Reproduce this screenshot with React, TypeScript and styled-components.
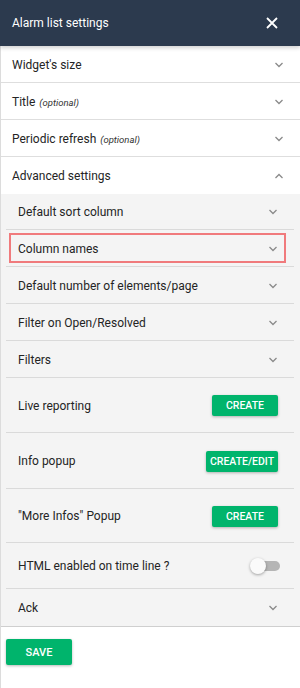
import React from "react";
import styled, { createGlobalStyle } from "styled-components";

const Global = createGlobalStyle`
  html, body { margin: 0; padding: 0; background: #fff; }
  body { font-family: Roboto, "Liberation Sans", Arial, sans-serif; -webkit-font-smoothing: antialiased; }
  * { box-sizing: border-box; }
`;

const Panel = styled.div`
  width: 300px;
  min-height: 688px;
  display: flex;
  flex-direction: column;
  background: #fff;
`;

const Header = styled.div`
  height: 46px;
  background: #2c3a4e;
  display: flex;
  align-items: center;
  justify-content: space-between;
  padding: 0 22px 0 12px;
  color: #fff;
  font-size: 12px;
  position: relative;
  z-index: 1;
  box-shadow: 0 2px 4px rgba(0, 0, 0, 0.18);
`;

const Body = styled.div`
  flex: 1;
  border-left: 1px solid #dcdcdc;
  display: flex;
  flex-direction: column;
`;

const TopRow = styled.div<{ $last?: boolean }>`
  height: 37px;
  display: flex;
  align-items: center;
  justify-content: space-between;
  padding: 1px 16px 0 11px;
  border-bottom: ${(p) => (p.$last ? "none" : "1px solid #dedede")};
  font-size: 12px;
  color: #242424;
`;

const Optional = styled.span`
  font-style: italic;
  font-size: 9.5px;
  color: #333;
  margin-left: 4px;
`;

const Sub = styled.div`
  background: #f4f4f4;
  padding: 0 6px 0 5px;
  border-bottom: 1px solid #cfcfcf;
`;

const Row = styled.div<{ $h?: number; $last?: boolean }>`
  height: ${(p) => p.$h ?? 37}px;
  display: flex;
  align-items: center;
  justify-content: space-between;
  padding: 1px 16px 0 12px;
  border-bottom: ${(p) => (p.$last ? "none" : "1px solid #dadada")};
  font-size: 12px;
  color: #242424;
`;

const HiRow = styled.div`
  height: 37px;
  padding: 3px 8px 3px 3px;
  border-bottom: 1px solid #dadada;
  display: flex;
`;

const HiBox = styled.div`
  flex: 1;
  display: flex;
  align-items: center;
  justify-content: space-between;
  border: 2px solid #f07a7c;
  padding: 1px 6px 0 7px;
  font-size: 12px;
  color: #242424;
`;

const GreenButton = styled.button<{ $w: number; $h?: number; $fs?: number }>`
  width: ${(p) => p.$w}px;
  height: ${(p) => p.$h ?? 21}px;
  border: none;
  border-radius: 2px;
  background: #00b46c;
  color: #fff;
  font-family: Roboto, "Liberation Sans", Arial, sans-serif;
  font-weight: 500;
  font-size: ${(p) => p.$fs ?? 10.5}px;
  padding: 0;
  box-shadow: 0 1px 3px rgba(0, 0, 0, 0.28);
`;

const Footer = styled.div`
  padding: 12px 0 0 5px;
`;

const Toggle = styled.div`
  width: 29px;
  height: 10px;
  border-radius: 5px;
  background: #b5b5b5;
  position: relative;
  margin-right: -2px;
`;

const Thumb = styled.div`
  position: absolute;
  left: -1px;
  top: -3px;
  width: 16px;
  height: 16px;
  border-radius: 50%;
  background: #fafafa;
  box-shadow: 0 1px 3px rgba(0, 0, 0, 0.35);
`;

const Chevron = ({ up }: { up?: boolean }) => (
  <svg width="10" height="6" viewBox="0 0 10 6" style={{ display: "block" }}>
    <polyline
      points={up ? "1.5,5 5,1.5 8.5,5" : "1.5,1 5,4.5 8.5,1"}
      fill="none"
      stroke="#8a8a8a"
      strokeWidth="1.3"
    />
  </svg>
);

const CloseIcon = () => (
  <svg width="12" height="12" viewBox="0 0 12 12" style={{ display: "block" }}>
    <path d="M1 1 L11 11 M11 1 L1 11" stroke="#fff" strokeWidth="1.8" />
  </svg>
);

export default function App() {
  return (
    <>
      <Global />
      <Panel>
        <Header>
          <span>Alarm list settings</span>
          <CloseIcon />
        </Header>
        <Body>
          <TopRow>
            <span>Widget's size</span>
            <Chevron />
          </TopRow>
          <TopRow>
            <span>
              Title<Optional>(optional)</Optional>
            </span>
            <Chevron />
          </TopRow>
          <TopRow>
            <span>
              Periodic refresh<Optional>(optional)</Optional>
            </span>
            <Chevron />
          </TopRow>
          <TopRow $last>
            <span>Advanced settings</span>
            <Chevron up />
          </TopRow>
          <Sub>
            <Row $h={36}>
              <span>Default sort column</span>
              <Chevron />
            </Row>
            <HiRow>
              <HiBox>
                <span>Column names</span>
                <Chevron />
              </HiBox>
            </HiRow>
            <Row>
              <span>Default number of elements/page</span>
              <Chevron />
            </Row>
            <Row>
              <span>Filter on Open/Resolved</span>
              <Chevron />
            </Row>
            <Row>
              <span>Filters</span>
              <Chevron />
            </Row>
            <Row $h={55}>
              <span>Live reporting</span>
              <GreenButton $w={66}>CREATE</GreenButton>
            </Row>
            <Row $h={56}>
              <span>Info popup</span>
              <GreenButton $w={72}>CREATE/EDIT</GreenButton>
            </Row>
            <Row $h={54}>
              <span>"More Infos" Popup</span>
              <GreenButton $w={66}>CREATE</GreenButton>
            </Row>
            <Row $h={46}>
              <span>HTML enabled on time line ?</span>
              <Toggle>
                <Thumb />
              </Toggle>
            </Row>
            <Row $last>
              <span>Ack</span>
              <Chevron />
            </Row>
          </Sub>
          <Footer>
            <GreenButton $w={66} $h={26} $fs={11}>
              SAVE
            </GreenButton>
          </Footer>
        </Body>
      </Panel>
    </>
  );
}
